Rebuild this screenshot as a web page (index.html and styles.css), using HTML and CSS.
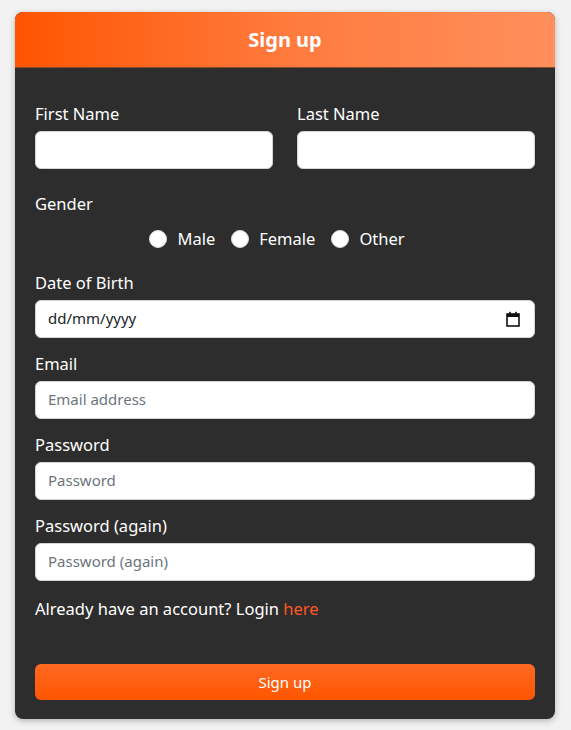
FILE: index.html
```html
<!DOCTYPE html>
<html lang="en">
<head>
<meta charset="utf-8">
<title>Sign up</title>
<link rel="stylesheet" href="styles.css">
</head>
<body>
<div class="card">
  <div class="card-header">Sign up</div>
  <form class="card-body">
    <div class="row">
      <div class="group">
        <label class="label">First Name</label>
        <input class="input" type="text">
      </div>
      <div class="group">
        <label class="label">Last Name</label>
        <input class="input" type="text">
      </div>
    </div>
    <div class="gender">
      <div class="label">Gender</div>
      <div class="radios">
        <label class="radio"><input type="radio" name="g"><span>Male</span></label>
        <label class="radio"><input type="radio" name="g"><span>Female</span></label>
        <label class="radio"><input type="radio" name="g"><span>Other</span></label>
      </div>
    </div>
    <div class="group">
      <label class="label">Date of Birth</label>
      <div class="input date">
        <input class="date-text" type="text" placeholder="dd/mm/yyyy">
        <svg class="cal" width="14" height="16" viewBox="0 0 14 16" aria-hidden="true">
          <rect x="1" y="3" width="12" height="12" fill="none" stroke="#111" stroke-width="1.6"/>
          <rect x="1" y="3" width="12" height="3" fill="#111"/>
          <rect x="3.2" y="0.8" width="1.6" height="3" fill="#111"/>
          <rect x="9.2" y="0.8" width="1.6" height="3" fill="#111"/>
        </svg>
      </div>
    </div>
    <div class="group">
      <label class="label">Email</label>
      <input class="input" type="email" placeholder="Email address">
    </div>
    <div class="group">
      <label class="label">Password</label>
      <input class="input" type="password" placeholder="Password">
    </div>
    <div class="group">
      <label class="label">Password (again)</label>
      <input class="input" type="password" placeholder="Password (again)">
    </div>
    <p class="login">Already have an account? Login <a href="#" class="link">here</a></p>
    <button class="btn" type="button">Sign up</button>
  </form>
</div>
</body>
</html>
```
FILE: styles.css
```css
* { box-sizing: border-box; }
body {
  margin: 0;
  background: #f2f2f2;
  font-family: "Noto Sans", "Open Sans", sans-serif;
  padding: 12px 16px 11px 15px;
}
.card {
  width: 540px;
  background: #2d2d2d;
  border-radius: 8px;
  overflow: hidden;
  box-shadow: 0 2px 6px rgba(0,0,0,0.25);
}
.card-header {
  height: 56px;
  display: flex;
  align-items: center;
  justify-content: center;
  color: #fff;
  font-weight: 700;
  font-size: 20px;
  background: linear-gradient(90deg, #ff5500 0%, #ff7a3d 50%, #ff8f5c 100%);
  border-bottom: 1px solid #8a4a2a;
}
.card-body {
  padding: 33px 20px 19px;
  color: #fff;
  display: flex;
  flex-direction: column;
}
.row {
  display: grid;
  grid-template-columns: 1fr 1fr;
  column-gap: 24px;
  margin-bottom: 22px;
}
.row .group { margin-bottom: 0; }
.group {
  display: flex;
  flex-direction: column;
  margin-bottom: 13px;
}
.label {
  font-size: 16.5px;
  line-height: 26px;
  margin-bottom: 4px;
  color: #fff;
}
.input {
  height: 38px;
  width: 100%;
  border: 1px solid #ced4da;
  border-radius: 6px;
  background: #fff;
  padding: 0 12px 2px;
  font-family: inherit;
  font-size: 15px;
  color: #212529;
  outline: none;
}
.input::placeholder { color: #6c757d; }
.date {
  display: flex;
  align-items: center;
  padding: 0 14px 0 12px;
}
.date-text {
  flex: 1;
  border: 0;
  outline: none;
  font-family: inherit;
  font-size: 15px;
  padding: 0 0 2px;
  background: transparent;
}
.date-text::placeholder { color: #212529; }
.cal { display: block; }
.gender {
  display: flex;
  flex-direction: column;
  margin-bottom: 20px;
}
.gender .label { margin-bottom: 11px; }
.radios {
  display: flex;
  justify-content: center;
}
.radio {
  display: flex;
  align-items: center;
  margin-right: 16px;
  font-size: 16.5px;
  line-height: 22px;
}
.radio input {
  appearance: none;
  -webkit-appearance: none;
  width: 18px;
  height: 18px;
  margin: 0 10px 0 0;
  border-radius: 50%;
  background: #fff;
  border: 1px solid #ddd;
}
.login {
  margin: 2px 0 0;
  font-size: 16.5px;
  line-height: 26px;
}
.link {
  color: #ff5722;
  text-decoration: none;
}
.btn {
  margin-top: 42px;
  height: 36px;
  border: 0;
  border-radius: 6px;
  background: linear-gradient(180deg, #ff6a22 0%, #ff5500 100%);
  color: #fff;
  font-family: inherit;
  font-size: 15px;
}
```
